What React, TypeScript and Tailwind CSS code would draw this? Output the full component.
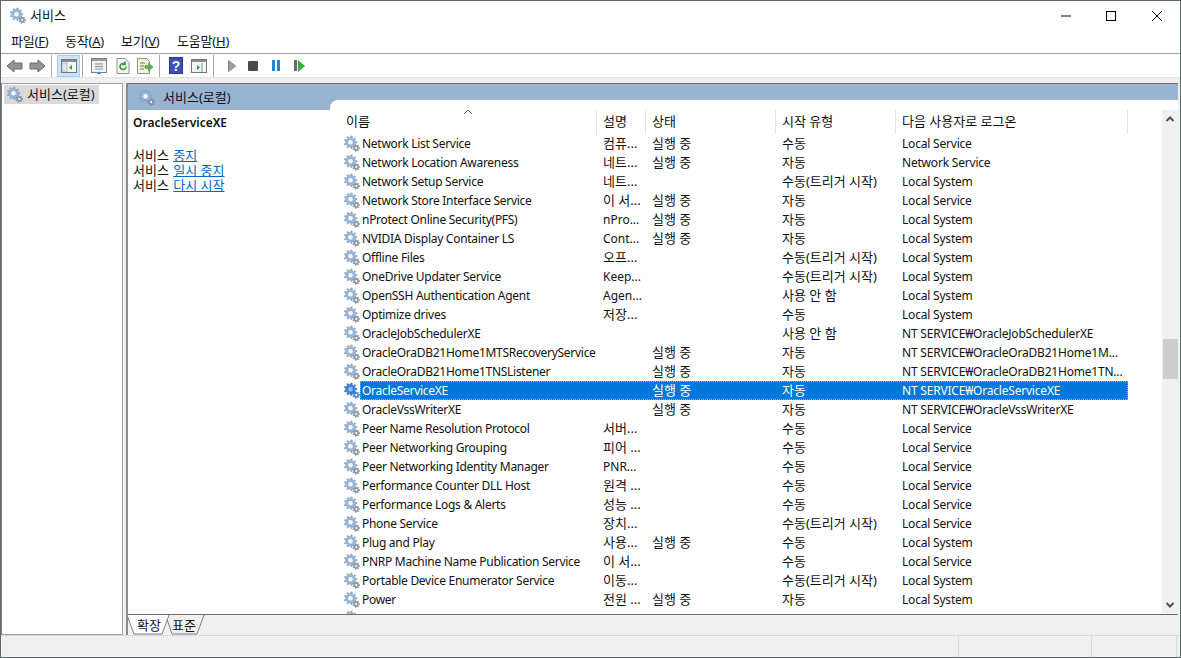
import React from "react";

type Row = { name: string; desc?: string; state?: string; start: string; logon: string; selected?: boolean };

const rows: Row[] = [
  { name: "Network List Service", desc: "컴퓨...", state: "실행 중", start: "수동", logon: "Local Service" },
  { name: "Network Location Awareness", desc: "네트...", state: "실행 중", start: "자동", logon: "Network Service" },
  { name: "Network Setup Service", desc: "네트...", start: "수동(트리거 시작)", logon: "Local System" },
  { name: "Network Store Interface Service", desc: "이 서...", state: "실행 중", start: "자동", logon: "Local Service" },
  { name: "nProtect Online Security(PFS)", desc: "nPro...", state: "실행 중", start: "자동", logon: "Local System" },
  { name: "NVIDIA Display Container LS", desc: "Cont...", state: "실행 중", start: "자동", logon: "Local System" },
  { name: "Offline Files", desc: "오프...", start: "수동(트리거 시작)", logon: "Local System" },
  { name: "OneDrive Updater Service", desc: "Keep...", start: "수동(트리거 시작)", logon: "Local System" },
  { name: "OpenSSH Authentication Agent", desc: "Agen...", start: "사용 안 함", logon: "Local System" },
  { name: "Optimize drives", desc: "저장...", start: "수동", logon: "Local System" },
  { name: "OracleJobSchedulerXE", start: "사용 안 함", logon: "NT SERVICE₩OracleJobSchedulerXE" },
  { name: "OracleOraDB21Home1MTSRecoveryService", state: "실행 중", start: "자동", logon: "NT SERVICE₩OracleOraDB21Home1M..." },
  { name: "OracleOraDB21Home1TNSListener", state: "실행 중", start: "자동", logon: "NT SERVICE₩OracleOraDB21Home1TN..." },
  { name: "OracleServiceXE", state: "실행 중", start: "자동", logon: "NT SERVICE₩OracleServiceXE", selected: true },
  { name: "OracleVssWriterXE", state: "실행 중", start: "자동", logon: "NT SERVICE₩OracleVssWriterXE" },
  { name: "Peer Name Resolution Protocol", desc: "서버...", start: "수동", logon: "Local Service" },
  { name: "Peer Networking Grouping", desc: "피어 ...", start: "수동", logon: "Local Service" },
  { name: "Peer Networking Identity Manager", desc: "PNR...", start: "수동", logon: "Local Service" },
  { name: "Performance Counter DLL Host", desc: "원격 ...", start: "수동", logon: "Local Service" },
  { name: "Performance Logs & Alerts", desc: "성능 ...", start: "수동", logon: "Local Service" },
  { name: "Phone Service", desc: "장치...", start: "수동(트리거 시작)", logon: "Local Service" },
  { name: "Plug and Play", desc: "사용...", state: "실행 중", start: "수동", logon: "Local System" },
  { name: "PNRP Machine Name Publication Service", desc: "이 서...", start: "수동", logon: "Local Service" },
  { name: "Portable Device Enumerator Service", desc: "이동...", start: "수동(트리거 시작)", logon: "Local System" },
  { name: "Power", desc: "전원 ...", state: "실행 중", start: "자동", logon: "Local System" },
  { name: "", start: "", logon: "" },
];

// 한글 셀은 13px, 라틴 셀은 12px
const sizeOf = (s?: string) => (s && /[가-힣]/.test(s) ? "text-[13px]" : "text-[12px]");

function gearPath(cx: number, cy: number, r1: number, r2: number, teeth: number) {
  const step = (Math.PI * 2) / teeth;
  let d = "";
  for (let i = 0; i < teeth; i++) {
    const a = i * step;
    const pts = [
      [r1, a - step * 0.5],
      [r1, a - step * 0.26],
      [r2, a - step * 0.14],
      [r2, a + step * 0.14],
      [r1, a + step * 0.26],
    ];
    pts.forEach(([r, t], j) => {
      d += `${i === 0 && j === 0 ? "M" : "L"}${(cx + r * Math.cos(t)).toFixed(2)} ${(cy + r * Math.sin(t)).toFixed(2)}`;
    });
  }
  return d + "Z";
}

function Gears({ selected }: { selected?: boolean }) {
  return (
    <svg width="17" height="17" viewBox="0 0 17 17" className="shrink-0" aria-hidden>
      <path d={gearPath(13.2, 13, 2.4, 3.5, 7)} fill={selected ? "#5c93d6" : "#8f9ba7"} stroke={selected ? "#1f64b8" : "#707c88"} strokeWidth="0.5" />
      <circle cx="13.2" cy="13" r="1" fill="#fff" />
      <path d={gearPath(7.5, 7.2, 4.6, 6.3, 9)} fill={selected ? "#3f86d8" : "#9dbcdc"} stroke={selected ? "#1d62b4" : "#7390b0"} strokeWidth="0.6" />
      <circle cx="7.5" cy="7.2" r="2.9" fill={selected ? "#8fc0f0" : "#f2f6fa"} stroke={selected ? "#1d62b4" : "#7390b0"} strokeWidth="0.7" />
    </svg>
  );
}

const Sep = () => <div className="w-px h-[22px] bg-[#a9a9a9]" />;

function Toolbar() {
  return (
    <div className="h-[23px] flex items-center border-t border-[#a0a0a0] box-content">
      <svg width="17" height="14" viewBox="0 0 17 14" className="ml-[5px]" aria-hidden>
        <path d="M1 7 8 1v3h8v6H8v3z" fill="#929292" stroke="#6a6a6a" />
      </svg>
      <svg width="17" height="14" viewBox="0 0 17 14" className="ml-[6px]" aria-hidden>
        <path d="M16 7 9 1v3H1v6h8v3z" fill="#929292" stroke="#6a6a6a" />
      </svg>
      <div className="ml-[5px]"><Sep /></div>
      <div className="ml-[5px] w-[23px] h-[22px] bg-[#cce4f7] border border-[#99d1ff] flex items-center justify-center">
        <svg width="16" height="14" viewBox="0 0 16 14" aria-hidden>
          <rect x="0.5" y="0.5" width="15" height="13" fill="#f4f4f4" stroke="#777" />
          <rect x="1" y="1" width="14" height="2" fill="#8a8a8a" />
          <rect x="1" y="4" width="5" height="9" fill="#dfe6ec" stroke="#888" strokeWidth="0.5" />
          <path d="M11 6v5L8 8.500z" fill="#2e9e3a" />
        </svg>
      </div>
      <div className="ml-[2px]"><Sep /></div>
      <svg width="16" height="16" viewBox="0 0 16 16" className="ml-[8px]" aria-hidden>
        <rect x="0.5" y="0.5" width="15" height="14" fill="#f2f2f2" stroke="#808080" />
        <rect x="1" y="1" width="14" height="2" fill="#9a9a9a" />
        <path d="M4 6h8M4 8.500h8M4 11h8" stroke="#7a8aa0" />
        <rect x="6" y="14" width="4" height="2" fill="#3a9ae0" />
      </svg>
      <svg width="14" height="16" viewBox="0 0 14 16" className="ml-[9px]" aria-hidden>
        <path d="M1 .5h8l4 4v11H1z" fill="#f6f6f6" stroke="#909090" />
        <path d="M10 8.500a3 3 0 1 1-1-2.300M9 3.500v3h-3" fill="none" stroke="#2f9a3a" strokeWidth="1.600" />
      </svg>
      <svg width="16" height="16" viewBox="0 0 16 16" className="ml-[7px]" aria-hidden>
        <path d="M.5.5h9l3 3v12H.5z" fill="#f7f3dc" stroke="#909090" />
        <path d="M3 5h5M3 8h4M3 11h4" stroke="#6a6a6a" />
        <path d="M8 7.500h3.500V5L16 9l-4.500 4v-2.500H8z" fill="#5cb648" stroke="#3a8a30" strokeWidth="0.500" />
      </svg>
      <div className="ml-[6px]"><Sep /></div>
      <svg width="14" height="17" viewBox="0 0 14 17" className="ml-[9px]" aria-hidden>
        <rect x="0.500" y="0.500" width="13" height="16" fill="#3b52b4" stroke="#2a3a8a" />
        <text x="7" y="13.500" textAnchor="middle" fontSize="14" fontWeight="700" fontFamily="Liberation Sans" fill="#fff">?</text>
      </svg>
      <svg width="16" height="14" viewBox="0 0 16 14" className="ml-[8px]" aria-hidden>
        <rect x="0.500" y="0.500" width="15" height="13" fill="#f4f4f4" stroke="#777" />
        <rect x="1" y="1" width="14" height="2" fill="#8a8a8a" />
        <path d="M6 6v5l3-2.500z" fill="#2e9e3a" />
        <path d="M11 4v9" stroke="#888" />
      </svg>
      <div className="ml-[6px]"><Sep /></div>
      <svg width="8" height="12" viewBox="0 0 8 12" className="ml-[14px]" aria-hidden>
        <path d="M.5.500 7.500 6 .5 11.500z" fill="#a0a0a0" stroke="#808080" />
      </svg>
      <div className="ml-[12px] w-[10px] h-[10px] bg-[#4a4a4a] rounded-[1px]" />
      <div className="ml-[14px] flex gap-[2px]">
        <div className="w-[3px] h-[11px] bg-[#1e88d8]" />
        <div className="w-[3px] h-[11px] bg-[#1e88d8]" />
      </div>
      <div className="ml-[14px] flex gap-[1px] items-center">
        <div className="w-[3px] h-[11px] bg-[#6a6a6a]" />
        <svg width="7" height="12" viewBox="0 0 7 12" aria-hidden>
          <path d="M0 0 7 6 0 12z" fill="#35b034" />
        </svg>
      </div>
    </div>
  );
}

function ListRow({ row }: { row: Row }) {
  const tone = row.selected ? "text-white" : "text-[#111]";
  return (
    <div className="h-[19px] flex items-center shrink-0">
      <div className="w-[17px] flex"><Gears selected={row.selected} /></div>
      <div className={`flex items-center h-[19px] w-[768px] ${row.selected ? "bg-[#0078d7] outline-1 outline-dotted -outline-offset-1 outline-[#f0a030]" : ""} ${tone}`}>
        <div className="w-[236px] pl-[2px] text-[12px] tracking-[-0.28px] whitespace-nowrap">{row.name}</div>
        <div className={`w-[49px] pl-[7px] ${sizeOf(row.desc)} whitespace-nowrap`}>{row.desc}</div>
        <div className="w-[130px] pl-[7px] text-[13px]">{row.state}</div>
        <div className="w-[120px] pl-[7px] text-[13px] whitespace-nowrap">{row.start}</div>
        <div className="pl-[7px] text-[12px] tracking-[-0.2px] whitespace-nowrap">{row.logon}</div>
      </div>
    </div>
  );
}

export default function App() {
  return (
    <div
      className="w-[1181px] h-[658px] flex flex-col border border-[#5f6b6b] bg-white text-[12px] leading-none text-[#111] overflow-hidden"
      style={{ fontFamily: '"Noto Sans", "Noto Sans CJK KR", sans-serif' }}
    >
      {/* 제목 표시줄 */}
      <div className="h-[29px] flex items-center shrink-0">
        <div className="ml-[8px]"><Gears /></div>
        <span className="ml-[4px] text-[13px]">서비스</span>
        <div className="ml-auto flex items-center">
          <svg width="46" height="29" viewBox="0 0 46 29" aria-hidden><path d="M19 15h10" stroke="#000" /></svg>
          <svg width="46" height="29" viewBox="0 0 46 29" aria-hidden><rect x="18.500" y="10.500" width="9" height="9" fill="none" stroke="#000" /></svg>
          <svg width="46" height="29" viewBox="0 0 46 29" aria-hidden><path d="M18 10l10 10M28 10 18 20" stroke="#000" /></svg>
        </div>
      </div>

      {/* 메뉴 */}
      <div className="h-[23px] flex items-center shrink-0 pl-[10px] text-[13px]">
        <span className="w-[54px] tracking-[-0.2px]">파일(<u>F</u>)</span>
        <span className="w-[56px] tracking-[-0.2px]">동작(<u>A</u>)</span>
        <span className="w-[56px] tracking-[-0.2px]">보기(<u>V</u>)</span>
        <span className="tracking-[-0.2px]">도움말(<u>H</u>)</span>
      </div>

      <Toolbar />
      <div className="h-[6px] bg-[#f0f0f0] border-t border-[#e3e3e3] shrink-0" />

      {/* 본문 */}
      <div className="flex-1 flex min-h-0 bg-[#f0f0f0]">
        <div className="w-[122px] border border-[#a0a0a0] border-l-[#808080] bg-white px-[2px] pt-[1px] shrink-0">
          <div className="h-[19px] flex items-center bg-[#d9d9d9] w-[95px] pl-[2px]">
            <Gears />
            <span className="ml-[4px] text-[13px]">서비스(로컬)</span>
          </div>
        </div>

        <div className="ml-[3px] flex-1 flex flex-col min-w-0 border-l-2 border-l-[#8a8a8a] mr-[2px]">
          <div className="flex-1 flex min-h-0 border-t border-[#6e6e6e] border-b bg-white">
            {/* 설명 패널 */}
            <div className="w-[202px] shrink-0">
              <div className="h-[26px] bg-[#98b4d1] flex items-center pl-[10px]">
                <Gears />
                <span className="ml-[8px] text-[13px]">서비스(로컬)</span>
              </div>
              <div className="pl-[5px] pt-[7px]">
                <div className="font-semibold text-[12px]">OracleServiceXE</div>
                <div className="mt-[19px] leading-[15px] text-[13px]">
                  <div>서비스 <a className="ml-[1px] text-[#0066cc] underline">중지</a></div>
                  <div>서비스 <a className="ml-[1px] text-[#0066cc] underline">일시 중지</a></div>
                  <div>서비스 <a className="ml-[1px] text-[#0066cc] underline">다시 시작</a></div>
                </div>
              </div>
            </div>

            {/* 서비스 목록 */}
            <div className="flex-1 flex flex-col min-w-0 bg-[#98b4d1]">
              <div className="h-[16px] shrink-0" />
              <div className="flex-1 bg-white rounded-tl-[8px] flex min-h-0">
                <div className="flex-1 min-w-0 flex flex-col overflow-hidden pl-[13px]">
                  <div className="mt-[10px] h-[24px] flex items-center shrink-0 relative text-[13px]">
                    <svg width="10" height="6" viewBox="0 0 10 6" className="absolute left-[120px] top-[-1px]" aria-hidden>
                      <path d="M1 5l4-4 4 4" fill="none" stroke="#666" />
                    </svg>
                    <div className="w-[254px] pl-[3px] pb-[2px] h-full flex items-center border-r border-[#e5e5e5]">이름</div>
                    <div className="w-[49px] pl-[6px] pb-[2px] h-full flex items-center border-r border-[#e5e5e5]">설명</div>
                    <div className="w-[130px] pl-[6px] pb-[2px] h-full flex items-center border-r border-[#e5e5e5]">상태</div>
                    <div className="w-[120px] pl-[6px] pb-[2px] h-full flex items-center border-r border-[#e5e5e5]">시작 유형</div>
                    <div className="w-[232px] pl-[6px] pb-[2px] h-full flex items-center border-r border-[#e5e5e5]">다음 사용자로 로그온</div>
                  </div>
                  {rows.map((r, i) => (
                    <ListRow key={i} row={r} />
                  ))}
                </div>

                {/* 스크롤바 */}
                <div className="mt-[10px] w-[16px] shrink-0 bg-[#f0f0f0] flex flex-col items-center">
                  <svg width="10" height="17" viewBox="0 0 10 17" aria-hidden><path d="M1.500 11 5 7.500 8.500 11" fill="none" stroke="#505050" strokeWidth="2" /></svg>
                  <div className="mt-[212px] w-[15px] h-[40px] bg-[#cdcdcd]" />
                  <div className="flex-1" />
                  <svg width="10" height="17" viewBox="0 0 10 17" aria-hidden><path d="M1.500 6 5 9.500 8.500 6" fill="none" stroke="#505050" strokeWidth="2" /></svg>
                </div>
              </div>
            </div>
          </div>

          {/* 탭 */}
          <div className="h-[20px] shrink-0 bg-[#f0f0f0] relative flex items-center text-[13px]">
            <svg width="82" height="20" viewBox="0 0 82 20" className="absolute left-[-2px] top-0" aria-hidden>
              <path d="M1 0 8 19H36L43 0" fill="#fff" stroke="#808080" />
              <path d="M41 4 46 19H71L78 0" fill="#f0f0f0" stroke="#808080" />
            </svg>
            <span className="relative ml-[9px]">확장</span>
            <span className="relative ml-[11px]">표준</span>
          </div>
        </div>
      </div>

      {/* 상태 표시줄 */}
      <div className="h-[22px] shrink-0 bg-[#f0f0f0] border-t border-[#d9d9d9] flex">
        <div className="w-[958px] border-r border-[#d9d9d9]" />
        <div className="w-[133px] border-r border-[#d9d9d9]" />
        <div className="w-[85px] border-r border-[#d9d9d9]" />
      </div>
    </div>
  );
}
